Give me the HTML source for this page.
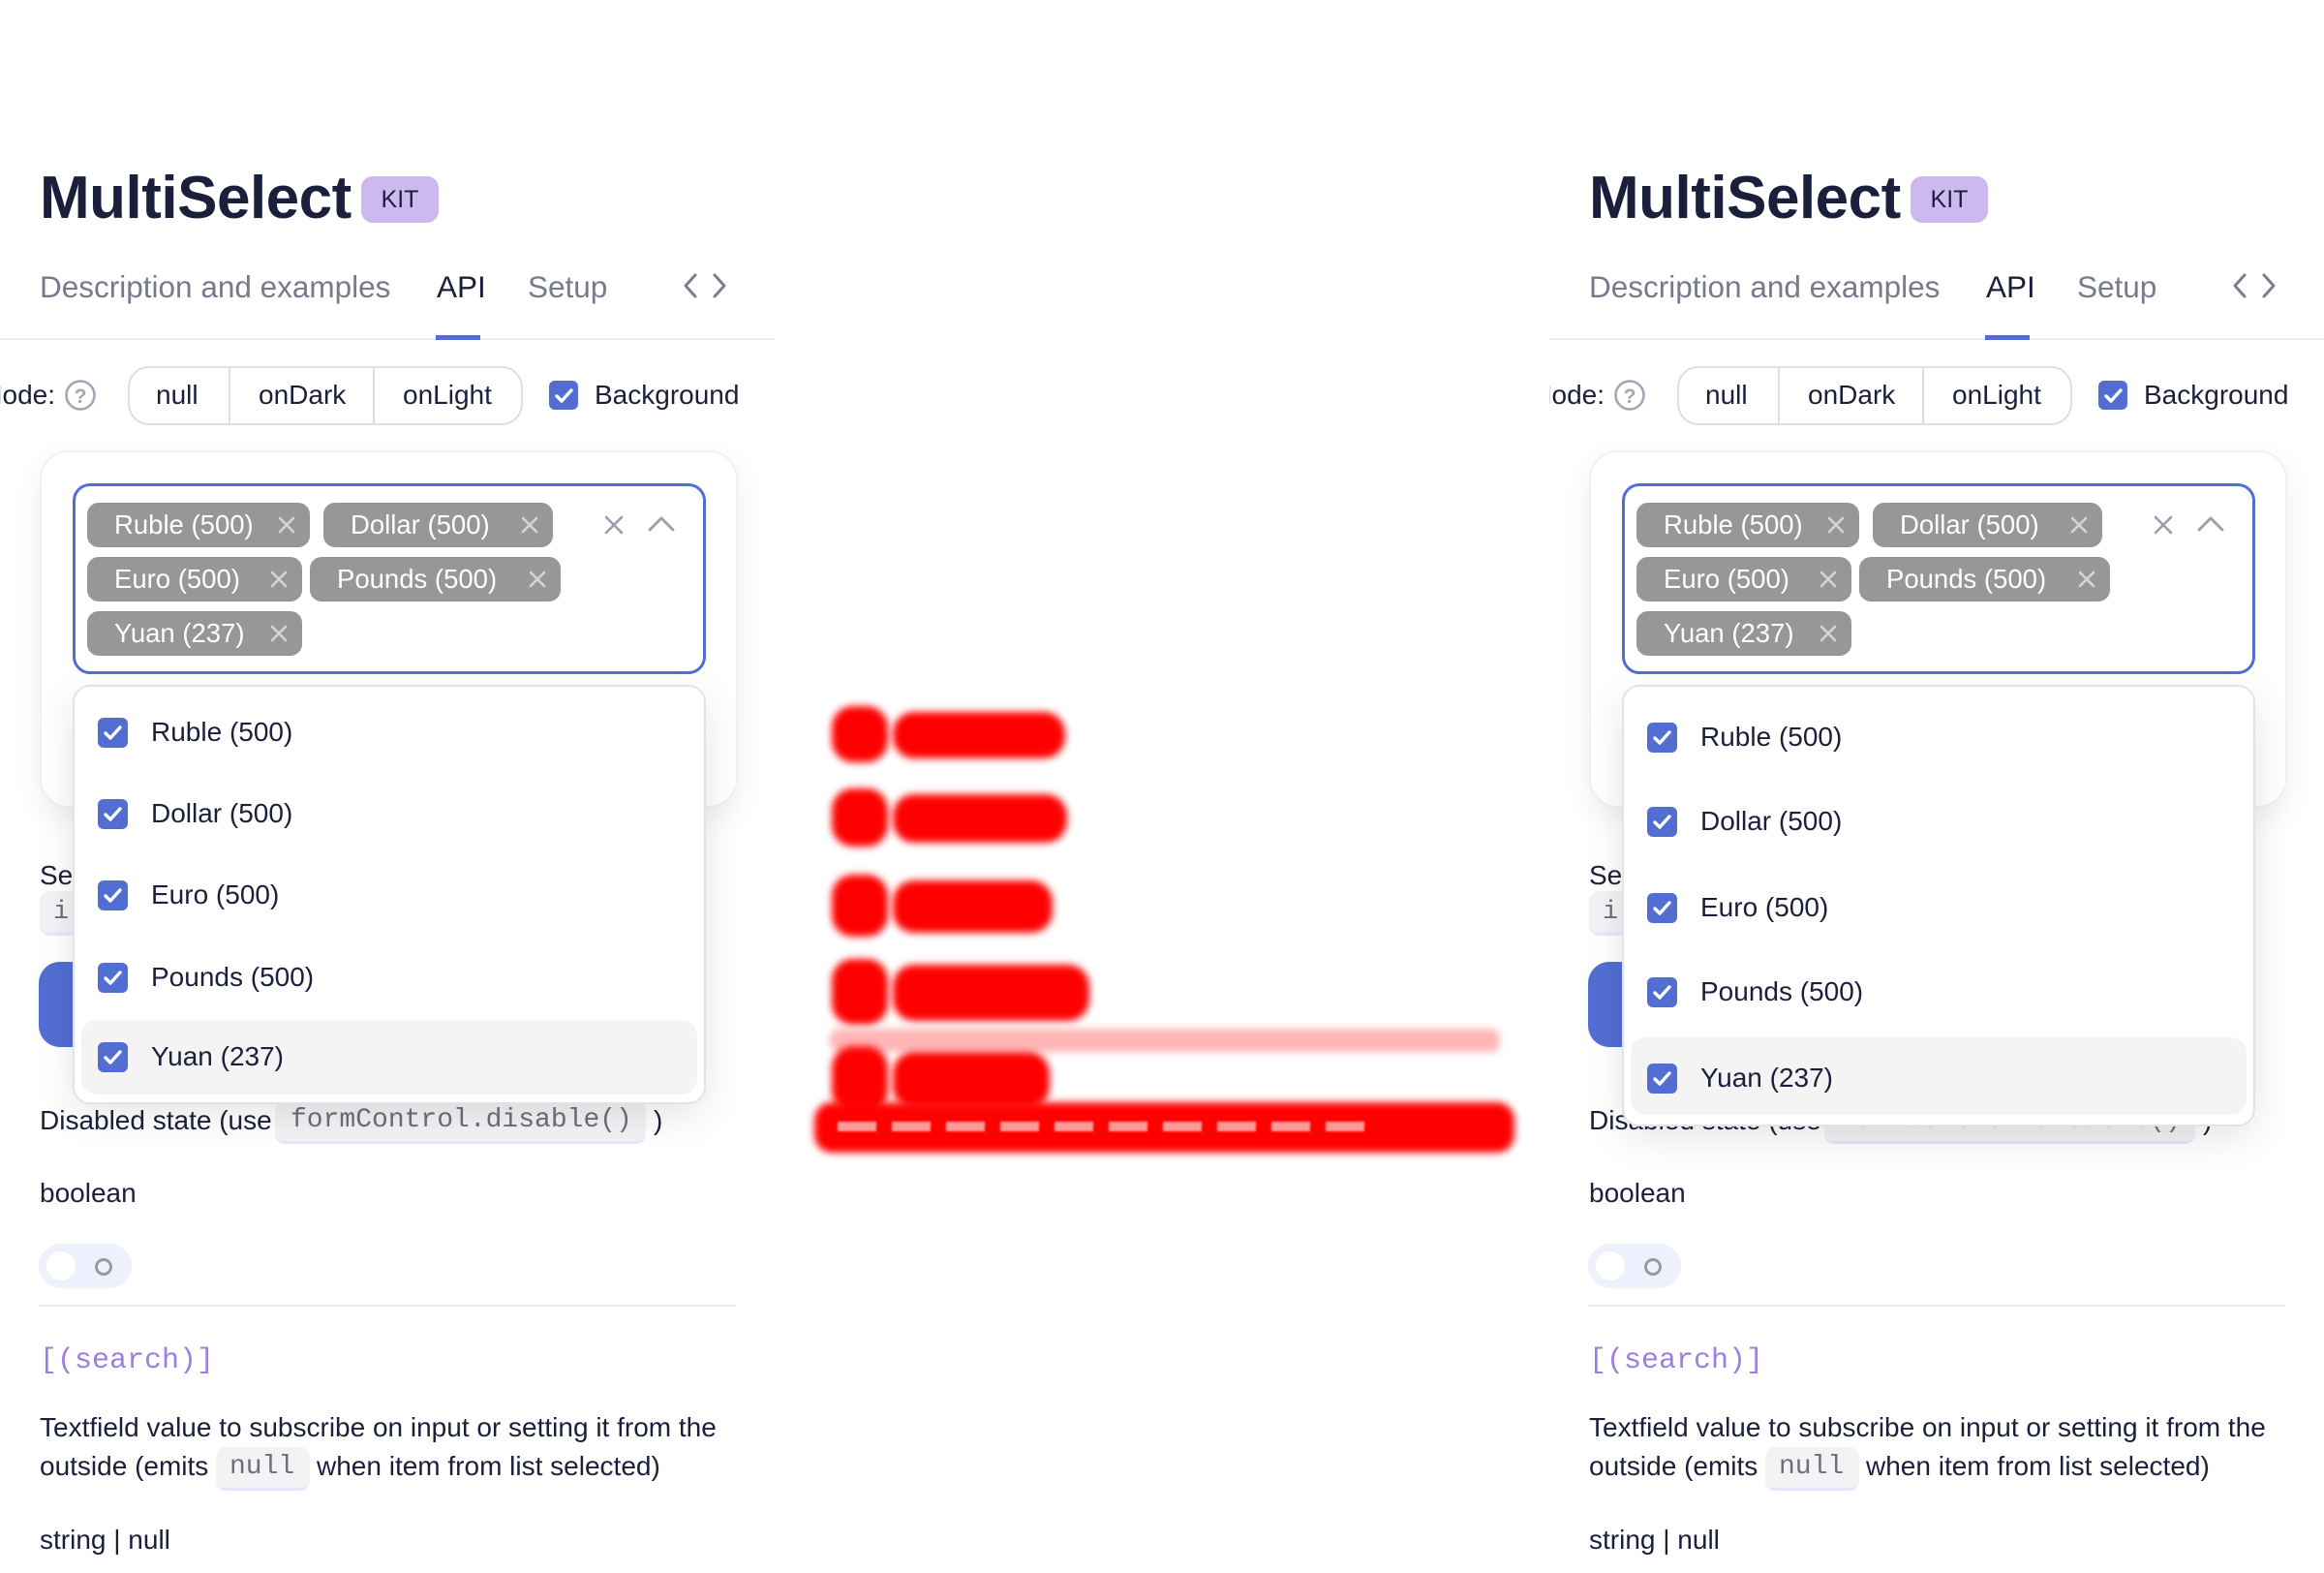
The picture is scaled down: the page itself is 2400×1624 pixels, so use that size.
<!DOCTYPE html>
<html><head><meta charset="utf-8"><style>
*{box-sizing:border-box;margin:0;padding:0}
body{width:2400px;height:1624px;background:#fff;position:relative;overflow:hidden;font-family:"Liberation Sans",sans-serif;color:#1b1f3b}
.p{position:absolute;top:0;width:800px;height:1624px;overflow:hidden}
.a{position:absolute;white-space:nowrap}
.t{font-size:28px;line-height:40px}
.title{left:41px;top:170px;font-size:62px;font-weight:bold;letter-spacing:-0.5px;line-height:70px}
.kit{left:373px;top:182px;width:80px;height:48px;border-radius:12px;background:#cdb8f0;font-size:25px;line-height:48px;text-align:center}
.tab{top:276px;font-size:31.5px;line-height:40px;color:#777a8c}
.chip{position:absolute;height:46px;border-radius:12px;background:#979797;color:#fff;font-size:27.5px;line-height:46px;padding-left:28px}
.chip svg{position:absolute;top:13px;right:14px}
.cb{position:absolute;width:31px;height:31px;border-radius:6px;background:#526ed3}
.code{position:absolute;background:#f3f3f5;border-radius:10px;border-bottom:3px solid #e4e8fb;font-family:"Liberation Mono",monospace;color:#6b6e7c}
.dd{position:absolute;left:75px;top:707px;width:654px;background:#fff;border:2px solid #e3e3e3;border-radius:18px;box-shadow:0 12px 40px rgba(0,0,0,.1);z-index:5}
.blob{position:absolute;background:#ff0000;border-radius:22px;filter:blur(4px)}
</style></head><body>

<div class="p" style="left:0" id="L"></div>
<div class="p" style="left:1600px" id="R"></div>

<div class="blob" style="left:859px;top:729px;width:58px;height:58px"></div>
<div class="blob" style="left:922px;top:735px;width:178px;height:48px"></div>
<div class="blob" style="left:859px;top:814px;width:58px;height:60px"></div>
<div class="blob" style="left:922px;top:820px;width:180px;height:50px"></div>
<div class="blob" style="left:859px;top:903px;width:58px;height:64px"></div>
<div class="blob" style="left:922px;top:909px;width:165px;height:54px"></div>
<div class="blob" style="left:859px;top:990px;width:58px;height:68px"></div>
<div class="blob" style="left:922px;top:996px;width:203px;height:58px"></div>
<div class="blob" style="left:857px;top:1062px;width:692px;height:24px;background:#ffb5b5;border-radius:10px"></div>
<div class="blob" style="left:859px;top:1080px;width:58px;height:68px"></div>
<div class="blob" style="left:922px;top:1086px;width:162px;height:58px"></div>
<div class="blob" style="left:841px;top:1138px;width:723px;height:52px;border-radius:18px"></div>
<div class="a" style="left:865px;top:1158px;width:560px;height:10px;background:repeating-linear-gradient(90deg,#fff 0 40px,transparent 40px 56px);opacity:.6;filter:blur(1px)"></div>

<script>
function build(el,right){
 const items=right?[761,848,937,1024,1113]:[756,840,924,1009,1091];
 const ddh=right?456:433, hy=right?1071:1053, hh=right?80:77;
 const x='<svg width="20" height="20" viewBox="0 0 20 20"><path d="M3 3L17 17M17 3L3 17" stroke="#d6d6d6" stroke-width="2.6" stroke-linecap="round"/></svg>';
 const chk='<svg width="31" height="31" viewBox="0 0 31 31"><path d="M8 16l5 5 10-11" stroke="#fff" stroke-width="3.4" fill="none" stroke-linecap="round" stroke-linejoin="round"/></svg>';
 const chip=(l,t,w,txt)=>`<div class="chip" style="left:${l}px;top:${t}px;width:${w}px">${txt}${x}</div>`;
 let h='';
 h+=`<div class="a title">MultiSelect</div><div class="a kit">KIT</div>`;
 h+=`<div class="a tab" style="left:41px">Description and examples</div>`;
 h+=`<div class="a tab" style="left:451px;color:#1b1f3b">API</div>`;
 h+=`<div class="a tab" style="left:545px">Setup</div>`;
 h+=`<svg class="a" style="left:704px;top:280px" width="48" height="30" viewBox="0 0 48 30"><path d="M14 4L4 15l10 11M34 4l10 11-10 11" stroke="#7b7e8e" stroke-width="3" fill="none" stroke-linecap="round" stroke-linejoin="round"/></svg>`;
 h+=`<div class="a" style="left:0;top:349px;width:800px;height:2px;background:#ececec"></div>`;
 h+=`<div class="a" style="left:450px;top:346px;width:46px;height:5px;background:#526ed3"></div>`;
 h+=`<div class="a t" style="right:743px;top:388px">Mode:</div>`;
 h+=`<svg class="a" style="left:66px;top:391px" width="34" height="34" viewBox="0 0 34 34"><circle cx="17" cy="17" r="14.5" fill="none" stroke="#a3a6b5" stroke-width="2.6"/><text x="17" y="25" text-anchor="middle" font-family="Liberation Sans" font-size="21" font-weight="bold" fill="#a3a6b5">?</text></svg>`;
 h+=`<div class="a" style="left:132px;top:378px;width:408px;height:61px;border:2px solid #dedede;border-radius:22px"></div>`;
 h+=`<div class="a" style="left:236px;top:380px;width:2px;height:57px;background:#dedede"></div><div class="a" style="left:385px;top:380px;width:2px;height:57px;background:#dedede"></div>`;
 h+=`<div class="a t" style="left:161px;top:388px">null</div><div class="a t" style="left:267px;top:388px">onDark</div><div class="a t" style="left:416px;top:388px">onLight</div>`;
 h+=`<div class="cb" style="left:567px;top:393px;width:30px;height:30px">${chk}</div><div class="a t" style="left:614px;top:388px">Background</div>`;
 h+=`<div class="a" style="left:41px;top:465px;width:721px;height:369px;border:2px solid #f1f1f1;border-radius:30px;box-shadow:0 10px 30px rgba(0,0,0,.07);background:#fff"></div>`;
 h+=`<div class="a" style="left:75px;top:499px;width:654px;height:197px;border:3px solid #526ed3;border-radius:18px"></div>`;
 h+=chip(90,519,230,'Ruble (500)')+chip(334,519,237,'Dollar (500)')+chip(90,575,222,'Euro (500)')+chip(320,575,259,'Pounds (500)')+chip(90,631,222,'Yuan (237)');
 h+=`<svg class="a" style="left:622px;top:530px" width="24" height="24" viewBox="0 0 24 24"><path d="M4 4L20 20M20 4L4 20" stroke="#9a9dab" stroke-width="2.6" stroke-linecap="round"/></svg>`;
 h+=`<svg class="a" style="left:668px;top:530px" width="30" height="22" viewBox="0 0 30 22"><path d="M3 17L15 5l12 12" stroke="#9a9dab" stroke-width="2.8" fill="none" stroke-linecap="round" stroke-linejoin="round"/></svg>`;
 h+=`<div class="a t" style="left:41px;top:884px">Set</div>`;
 h+=`<div class="code" style="left:41px;top:920px;width:80px;height:46px;font-size:27px;line-height:44px;padding-left:14px">i</div>`;
 h+=`<div class="a" style="left:40px;top:993px;width:80px;height:88px;border-radius:22px;background:#526ed3"></div>`;
 h+=`<div class="a t" style="left:41px;top:1137px">Disabled state (use</div>`;
 h+=`<div class="code" style="left:284px;top:1136px;width:383px;height:45px;font-size:28px;line-height:42px;padding-left:16px">formControl.disable()</div>`;
 h+=`<div class="a t" style="left:675px;top:1137px">)</div>`;
 h+=`<div class="a t" style="left:41px;top:1212px">boolean</div>`;
 h+=`<div class="a" style="left:40px;top:1284px;width:96px;height:46px;border-radius:23px;background:#eef0fd"></div><div class="a" style="left:48px;top:1292px;width:30px;height:30px;border-radius:50%;background:#fff"></div><div class="a" style="left:98px;top:1299px;width:18px;height:18px;border-radius:50%;border:3.5px solid #9a9a9a"></div>`;
 h+=`<div class="a" style="left:40px;top:1347px;width:720px;height:2px;background:#ececec"></div>`;
 h+=`<div class="a" style="left:41px;top:1385px;font-family:'Liberation Mono',monospace;font-size:30px;line-height:40px;color:#9d7ee0">[(search)]</div>`;
 h+=`<div class="a t" style="left:41px;top:1454px">Textfield value to subscribe on input or setting it from the</div>`;
 h+=`<div class="a t" style="left:41px;top:1494px">outside (emits</div>`;
 h+=`<div class="code" style="left:223px;top:1494px;width:97px;height:45px;font-size:28px;line-height:42px;padding-left:14px">null</div>`;
 h+=`<div class="a t" style="left:327px;top:1494px">when item from list selected)</div>`;
 h+=`<div class="a t" style="left:41px;top:1570px">string | null</div>`;
 let d=`<div class="dd" style="height:${ddh}px"><div class="a" style="left:7px;top:${hy-709}px;width:636px;height:${hh}px;border-radius:16px;background:#f4f4f4"></div>`;
 ['Ruble (500)','Dollar (500)','Euro (500)','Pounds (500)','Yuan (237)'].forEach((s,i)=>{const y=items[i]-709;
  d+=`<div class="cb" style="left:24px;top:${y-15}px">${chk}</div><div class="a t" style="left:79px;top:${y-20}px">${s}</div>`;});
 d+='</div>';
 el.innerHTML=h+d;
}
build(document.getElementById('L'),false);build(document.getElementById('R'),true);
</script>
</body></html>
